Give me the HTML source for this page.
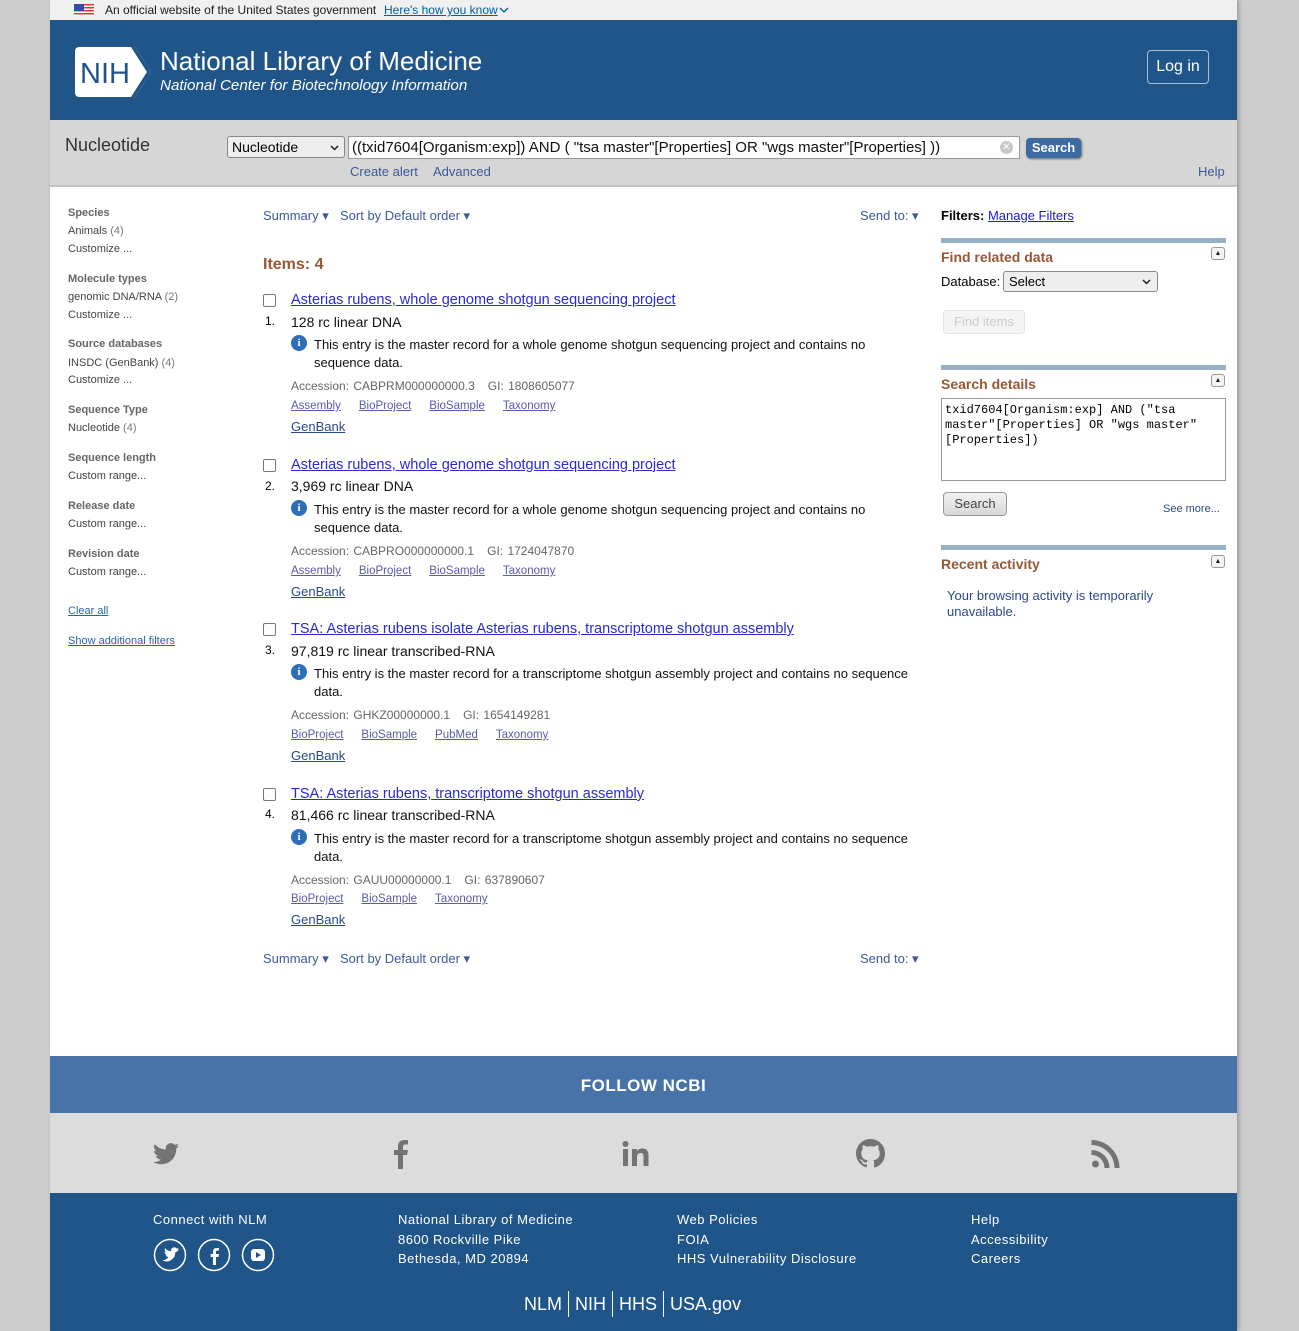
<!DOCTYPE html>
<html><head><meta charset="utf-8"><style>
*{box-sizing:border-box;margin:0;padding:0}
body{width:1299px;height:1331px;background:#cdcdcd;font-family:"Liberation Sans",Arial,sans-serif;position:relative;overflow:hidden}
.page{position:absolute;left:50px;top:0;width:1187px;height:1331px;background:#fff;box-shadow:2px 0 4px rgba(0,0,0,.25)}
.a{position:absolute;white-space:nowrap}
.gov{left:0;top:0;width:1187px;height:20px;background:#f0f0f0;font-size:12px;color:#1b1b1b}
.hdr{left:0;top:20px;width:1187px;height:100px;background:#20558a}
.sbar{left:0;top:120px;width:1187px;height:67px;background:#d6d6d6;border-bottom:2px solid #c4c4c4}
.lnk{color:#3c5a9a}
.sh{font-size:11px;font-weight:bold;color:#666}
.si{font-size:11px;color:#444}
.sg{color:#777}
.ttl{font-size:14.5px;color:#2a2ad0;text-decoration:underline}
.sub{font-size:14px;color:#111}
.desc{font-size:13px;color:#111;line-height:18px;white-space:normal;width:590px}
.acc{font-size:12px;color:#666;word-spacing:1px}
.sl{font-size:11.5px;color:#5a5aa8;text-decoration:underline;margin-right:18px}
.gb{font-size:13px;color:#2a4a8a;text-decoration:underline}
.cb{width:13px;height:13px;border:1.5px solid #777;border-radius:2px;background:#fff}
.info{width:16px;height:16px;border-radius:50%;background:#2d6eb8;color:#fff;font:bold 11px/16px "Liberation Serif",serif;text-align:center}
.tb{font-size:13px;color:#3c5a9a}
.bar{height:5px;background:#97b0c8;width:285px}
.oh{font-size:14px;font-weight:bold;color:#985735}
.tog{width:14px;height:13px;border:1px solid #999;border-radius:3px;background:#f4f4f4;font-size:7px;line-height:11px;text-align:center;color:#123}
.ft{color:#fff;font-size:13px;letter-spacing:.5px}
</style></head><body>
<div class="page">
<div class="a gov">
 <svg class="a" style="left:24px;top:4px" width="20" height="12" viewBox="0 0 20 12"><rect width="20" height="12" fill="#fff"/><g fill="#d83933"><rect y="0" width="20" height="1.5"/><rect y="3" width="20" height="1.5"/><rect y="6" width="20" height="1.5"/><rect y="9" width="20" height="1.5"/></g><rect width="10" height="7" fill="#3949ab"/></svg>
 <span class="a" style="left:55px;top:3px">An official website of the United States government</span>
 <span class="a" style="left:334px;top:3px;color:#005ea2;text-decoration:underline">Here's how you know</span>
 <svg class="a" style="left:449px;top:7px" width="10" height="7"><path d="M1 1l4 4 4-4" stroke="#005ea2" fill="none" stroke-width="1.3"/></svg>
</div>
<div class="a hdr">
 <svg class="a" style="left:25px;top:27px" width="80" height="50" viewBox="0 0 80 50"><path d="M4 0h56l16 25-16 25H4a4 4 0 0 1-4-4V4a4 4 0 0 1 4-4z" fill="#fff"/><path d="M62 0h4l16 25-16 25h-4l16-25z" fill="#20558a" transform="translate(-6 0)"/><text x="5" y="36" font-family="Liberation Sans" font-size="29" fill="#20558a" textLength="50" lengthAdjust="spacingAndGlyphs">NIH</text></svg>
 <span class="a" style="left:110px;top:26px;font-size:26px;color:#fff">National Library of Medicine</span>
 <span class="a" style="left:110px;top:57px;font-size:15.2px;font-style:italic;color:#fff">National Center for Biotechnology Information</span>
 <span class="a" style="left:1097px;top:30px;width:62px;height:34px;border:1px solid #a8bfd6;border-radius:4px;color:#fff;font-size:16px;text-align:center;line-height:32px">Log in</span>
</div>
<div class="a sbar">
 <span class="a" style="left:15px;top:15px;font-size:18px;color:#333">Nucleotide</span>
 <div class="a" style="left:177px;top:16px;width:118px;height:22px;border:1px solid #888;border-radius:3px;background:#eee;font-size:14px;padding:2px 4px">Nucleotide<svg class="a" style="right:5px;top:8px" width="9" height="6"><path d="M1 1l3.5 3.5L8 1" stroke="#222" fill="none" stroke-width="1.5"/></svg></div>
 <div class="a" style="left:298px;top:16px;width:672px;height:23px;border:1px solid #999;background:#fff;font-size:15px;padding:2px 3px;color:#111">((txid7604[Organism:exp]) AND ( "tsa master"[Properties] OR "wgs master"[Properties] ))<span class="a" style="right:6px;top:4px;width:13px;height:13px;border-radius:50%;background:#c8c8c8;color:#fff;font-size:10px;line-height:13px;text-align:center">✕</span></div>
 <div class="a" style="left:976px;top:18px;width:55px;height:20px;background:#3d6aa0;border-radius:4px;color:#fff;font-size:13px;font-weight:bold;text-align:center;line-height:20px;box-shadow:1px 1px 2px #666">Search</div>
 <span class="a lnk" style="left:300px;top:44px;font-size:13px">Create alert</span>
 <span class="a lnk" style="left:383px;top:44px;font-size:13px">Advanced</span>
 <span class="a lnk" style="left:1148px;top:44px;font-size:13px">Help</span>
</div>

<span class="a sh" style="left:18px;top:207px">Species</span>
<span class="a si" style="left:18px;top:225px">Animals <span class="sg">(4)</span></span>
<span class="a si" style="left:18px;top:243px">Customize ...</span>
<span class="a sh" style="left:18px;top:273px">Molecule types</span>
<span class="a si" style="left:18px;top:291px">genomic DNA/RNA <span class="sg">(2)</span></span>
<span class="a si" style="left:18px;top:309px">Customize ...</span>
<span class="a sh" style="left:18px;top:338px">Source databases</span>
<span class="a si" style="left:18px;top:357px">INSDC (GenBank) <span class="sg">(4)</span></span>
<span class="a si" style="left:18px;top:374px">Customize ...</span>
<span class="a sh" style="left:18px;top:404px">Sequence Type</span>
<span class="a si" style="left:18px;top:422px">Nucleotide <span class="sg">(4)</span></span>
<span class="a sh" style="left:18px;top:452px">Sequence length</span>
<span class="a si" style="left:18px;top:470px">Custom range...</span>
<span class="a sh" style="left:18px;top:500px">Release date</span>
<span class="a si" style="left:18px;top:518px">Custom range...</span>
<span class="a sh" style="left:18px;top:548px">Revision date</span>
<span class="a si" style="left:18px;top:566px">Custom range...</span>
<span class="a" style="left:18px;top:605px;font-size:11px;color:#2a62a6;text-decoration:underline">Clear all</span>
<span class="a" style="left:18px;top:635px;font-size:11px;color:#2a62a6;text-decoration:underline">Show additional filters</span>

<span class="a tb" style="left:213px;top:208px">Summary ▾</span>
<span class="a tb" style="left:290px;top:208px">Sort by Default order ▾</span>
<span class="a tb" style="left:810px;top:208px">Send to: ▾</span>
<span class="a" style="left:213px;top:256px;font-size:16px;font-weight:bold;color:#985735">Items: 4</span>

<div class="a cb" style="left:213px;top:294px"></div>
<span class="a ttl" style="left:241px;top:292px">Asterias rubens, whole genome shotgun sequencing project</span>
<span class="a" style="left:215px;top:314px;font-size:12px">1.</span>
<span class="a sub" style="left:241px;top:314px">128 rc linear DNA</span>
<div class="a info" style="left:241px;top:335px">i</div>
<div class="a desc" style="left:264px;top:336px">This entry is the master record for a whole genome shotgun sequencing project and contains no sequence data.</div>
<span class="a acc" style="left:241px;top:379px">Accession: CABPRM000000000.3 &nbsp; GI: 1808605077</span>
<span class="a" style="left:241px;top:396px"><span class="sl">Assembly</span><span class="sl">BioProject</span><span class="sl">BioSample</span><span class="sl">Taxonomy</span></span>
<span class="a gb" style="left:241px;top:419px">GenBank</span>

<div class="a cb" style="left:213px;top:459px"></div>
<span class="a ttl" style="left:241px;top:457px">Asterias rubens, whole genome shotgun sequencing project</span>
<span class="a" style="left:215px;top:479px;font-size:12px">2.</span>
<span class="a sub" style="left:241px;top:478px">3,969 rc linear DNA</span>
<div class="a info" style="left:241px;top:500px">i</div>
<div class="a desc" style="left:264px;top:501px">This entry is the master record for a whole genome shotgun sequencing project and contains no sequence data.</div>
<span class="a acc" style="left:241px;top:544px">Accession: CABPRO000000000.1 &nbsp; GI: 1724047870</span>
<span class="a" style="left:241px;top:561px"><span class="sl">Assembly</span><span class="sl">BioProject</span><span class="sl">BioSample</span><span class="sl">Taxonomy</span></span>
<span class="a gb" style="left:241px;top:584px">GenBank</span>

<div class="a cb" style="left:213px;top:623px"></div>
<span class="a ttl" style="left:241px;top:621px">TSA: Asterias rubens isolate Asterias rubens, transcriptome shotgun assembly</span>
<span class="a" style="left:215px;top:643px;font-size:12px">3.</span>
<span class="a sub" style="left:241px;top:643px">97,819 rc linear transcribed-RNA</span>
<div class="a info" style="left:241px;top:664px">i</div>
<div class="a desc" style="left:264px;top:665px;width:620px">This entry is the master record for a transcriptome shotgun assembly project and contains no sequence data.</div>
<span class="a acc" style="left:241px;top:708px">Accession: GHKZ00000000.1 &nbsp; GI: 1654149281</span>
<span class="a" style="left:241px;top:725px"><span class="sl">BioProject</span><span class="sl">BioSample</span><span class="sl">PubMed</span><span class="sl">Taxonomy</span></span>
<span class="a gb" style="left:241px;top:748px">GenBank</span>

<div class="a cb" style="left:213px;top:788px"></div>
<span class="a ttl" style="left:241px;top:786px">TSA: Asterias rubens, transcriptome shotgun assembly</span>
<span class="a" style="left:215px;top:807px;font-size:12px">4.</span>
<span class="a sub" style="left:241px;top:807px">81,466 rc linear transcribed-RNA</span>
<div class="a info" style="left:241px;top:829px">i</div>
<div class="a desc" style="left:264px;top:830px;width:620px">This entry is the master record for a transcriptome shotgun assembly project and contains no sequence data.</div>
<span class="a acc" style="left:241px;top:873px">Accession: GAUU00000000.1 &nbsp; GI: 637890607</span>
<span class="a" style="left:241px;top:889px"><span class="sl">BioProject</span><span class="sl">BioSample</span><span class="sl">Taxonomy</span></span>
<span class="a gb" style="left:241px;top:912px">GenBank</span>

<span class="a tb" style="left:213px;top:951px">Summary ▾</span>
<span class="a tb" style="left:290px;top:951px">Sort by Default order ▾</span>
<span class="a tb" style="left:810px;top:951px">Send to: ▾</span>

<span class="a" style="left:891px;top:208px;font-size:13px"><b>Filters:</b> <span style="color:#1a1ae0;text-decoration:underline">Manage Filters</span></span>
<div class="a bar" style="left:891px;top:238px"></div>
<span class="a oh" style="left:891px;top:249px">Find related data</span>
<div class="a tog" style="left:1161px;top:247px">▲</div>
<span class="a" style="left:891px;top:274px;font-size:13px">Database:</span>
<div class="a" style="left:953px;top:271px;width:155px;height:21px;border:1px solid #888;border-radius:3px;background:#eee;font-size:13px;padding:2px 5px">Select<svg class="a" style="right:6px;top:7px" width="9" height="6"><path d="M1 1l3.5 3.5L8 1" stroke="#222" fill="none" stroke-width="1.5"/></svg></div>
<div class="a" style="left:893px;top:310px;width:82px;height:24px;border:1px solid #e4e4e4;border-radius:4px;background:#f4f4f4;color:#ccc;font-size:13px;text-align:center;line-height:22px">Find items</div>
<div class="a bar" style="left:891px;top:365px"></div>
<span class="a oh" style="left:891px;top:376px">Search details</span>
<div class="a tog" style="left:1161px;top:374px">▲</div>
<div class="a" style="left:891px;top:398px;width:285px;height:83px;border:1px solid #999;font:12px/15px 'Liberation Mono',monospace;padding:4px 3px;white-space:normal">txid7604[Organism:exp] AND ("tsa master"[Properties] OR "wgs master"[Properties])</div>
<div class="a" style="left:893px;top:492px;width:64px;height:24px;border:1px solid #999;border-radius:4px;background:linear-gradient(#f2f2f2,#d8d8d8);font-size:13px;color:#444;text-align:center;line-height:22px">Search</div>
<span class="a" style="left:1113px;top:503px;font-size:11px;color:#2a4a8a">See more...</span>
<div class="a bar" style="left:891px;top:545px"></div>
<span class="a oh" style="left:891px;top:556px">Recent activity</span>
<div class="a tog" style="left:1161px;top:555px">▲</div>
<div class="a" style="left:897px;top:588px;font-size:13px;color:#2a4a8a;line-height:16px">Your browsing activity is temporarily<br>unavailable.</div>

<div class="a" style="left:0;top:1056px;width:1187px;height:57px;background:#4773a9;color:#fff;font-size:17px;font-weight:bold;text-align:center;line-height:60px;letter-spacing:.5px">FOLLOW NCBI</div>
<div class="a" style="left:0;top:1113px;width:1187px;height:80px;background:#dcdcdc">
 <svg class="a" style="left:103px;top:30px" width="26" height="22" viewBox="0 0 24 20"><path d="M24 2.4a10 10 0 0 1-2.8.8A5 5 0 0 0 23.3.4a10 10 0 0 1-3.1 1.2A4.9 4.9 0 0 0 11.8 6 14 14 0 0 1 1.7.9a4.9 4.9 0 0 0 1.5 6.6 4.9 4.9 0 0 1-2.2-.6 4.9 4.9 0 0 0 3.9 4.8 4.9 4.9 0 0 1-2.2.1 4.9 4.9 0 0 0 4.6 3.4A9.9 9.9 0 0 1 0 17.3 14 14 0 0 0 7.5 19.5c9 0 14-7.5 14-14v-.6A10 10 0 0 0 24 2.4z" fill="#737373"/></svg>
 <svg class="a" style="left:343px;top:26px" width="16" height="30" viewBox="0 0 16 30"><path d="M10 30V16h4l1-5h-5V8c0-1.5.5-2.5 2.5-2.5H15V1.2C14.5 1 13 1 11.3 1 7.7 1 5 3.2 5 7.3V11H1v5h4v14z" fill="#737373"/></svg>
 <svg class="a" style="left:572px;top:28px" width="28" height="26" viewBox="0 0 28 26"><rect x="1" y="8" width="5" height="17" fill="#737373"/><circle cx="3.5" cy="3" r="3" fill="#737373"/><path d="M10 8h5v2.5c1-2 3-3 5.5-3 4 0 6 2.5 6 7V25h-5v-9.5c0-2.5-1-3.5-3-3.5s-3.5 1.5-3.5 3.8V25h-5z" fill="#737373"/></svg>
 <svg class="a" style="left:806px;top:26px" width="29" height="29" viewBox="0 0 16 16"><path fill="#737373" d="M8 0C3.58 0 0 3.58 0 8c0 3.540 2.29 6.53 5.47 7.59.4.07.55-.17.55-.38v-1.33c-2.230.48-2.7-.97-2.7-.97-.36-.92-.89-1.170-.89-1.170-.73-.5.05-.49.05-.49.8.06 1.23.83 1.23.83.72 1.22 1.87.87 2.33.66.07-.52.28-.87.51-1.07-1.78-.2-3.64-.89-3.64-3.95 0-.87.31-1.59.82-2.15-.08-.2-.36-1.02.08-2.12 0 0 .67-.21 2.2.82a7.6 7.6 0 0 1 4 0c1.53-1.04 2.2-.82 2.2-.82.44 1.1.16 1.92.08 2.12.51.56.82 1.27.82 2.15 0 3.07-1.87 3.75-3.65 3.95.29.25.54.73.54 1.48v2.2c0 .21.15.46.55.38A8 8 0 0 0 16 8c0-4.42-3.58-8-8-8z"/></svg>
 <svg class="a" style="left:1041px;top:27px" width="29" height="28" viewBox="0 0 28 28"><circle cx="4" cy="24" r="3.5" fill="#737373"/><path d="M0 10a18 18 0 0 1 18 18h-5A13 13 0 0 0 0 15z" fill="#737373"/><path d="M0 0a28 28 0 0 1 28 28h-5A23 23 0 0 0 0 5z" fill="#737373"/></svg>
</div>
<div class="a" style="left:0;top:1193px;width:1187px;height:138px;background:#20558a">
 <span class="a ft" style="left:103px;top:19px">Connect with NLM</span>
 <svg class="a" style="left:103px;top:45px" width="125" height="34"><g fill="none" stroke="#fff" stroke-width="1.5"><circle cx="17" cy="17" r="15.5"/><circle cx="61" cy="17" r="15.5"/><circle cx="105" cy="17" r="15.5"/></g><path d="M26 11a6 6 0 0 1-2 .6 3 3 0 0 0 1.5-1.8 6 6 0 0 1-2 .7 3 3 0 0 0-5.2 2.8 8.6 8.6 0 0 1-6.3-3.2 3 3 0 0 0 1 4 3 3 0 0 1-1.4-.4 3 3 0 0 0 2.4 3 3 3 0 0 1-1.4 0 3 3 0 0 0 2.8 2.1A6 6 0 0 1 9 22a8.6 8.6 0 0 0 13.2-7.6A6 6 0 0 0 26 11z" fill="#fff"/><path d="M63 27v-8h2.5l.5-3h-3v-2c0-1 .3-1.5 1.5-1.5H66V10h-2.300c-2.5 0-3.700 1.5-3.700 3.8V16h-2.3v3H60v8z" fill="#fff"/><rect x="98" y="11" width="14" height="12" rx="3" fill="#fff"/><path d="M103 14v6l5-3z" fill="#20558a"/></svg>
 <span class="a ft" style="left:348px;top:17px;line-height:19.5px">National Library of Medicine<br>8600 Rockville Pike<br>Bethesda, MD 20894</span>
 <span class="a ft" style="left:627px;top:17px;line-height:19.5px">Web Policies<br>FOIA<br>HHS Vulnerability Disclosure</span>
 <span class="a ft" style="left:921px;top:17px;line-height:19.5px">Help<br>Accessibility<br>Careers</span>
 <div class="a" style="left:468px;top:98px;color:#fff;font-size:18px;display:flex;align-items:center">
  <span style="padding:0 6px">NLM</span><span style="border-left:1px solid #fff;height:26px"></span><span style="padding:0 6px">NIH</span><span style="border-left:1px solid #fff;height:26px"></span><span style="padding:0 6px">HHS</span><span style="border-left:1px solid #fff;height:26px"></span><span style="padding:0 6px">USA.gov</span>
 </div>
</div>
</div>
</body></html>
